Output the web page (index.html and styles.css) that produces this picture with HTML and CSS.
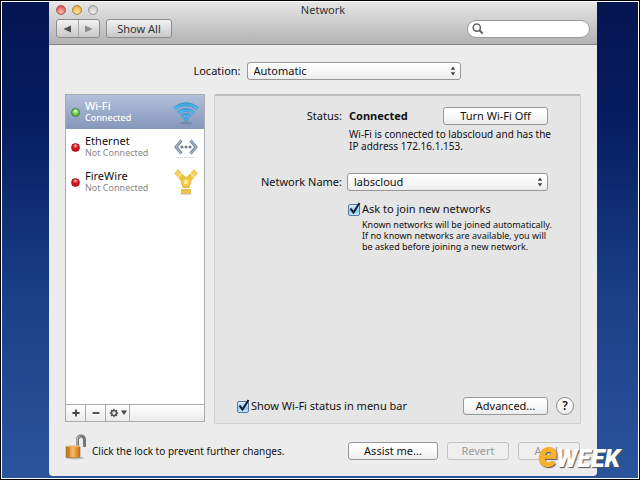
FILE: index.html
```
<!DOCTYPE html>
<html lang="en">
<head>
<meta charset="utf-8">
<title>Network</title>
<link rel="stylesheet" href="styles.css">
</head>
<body>
<div class="slide">
  <div class="desktop">
    <main class="window">
      <header class="toolbar">
        <div class="titlebar">
          <div class="lights">
            <button class="light light-red" aria-label="Close"></button>
            <button class="light light-amber" aria-label="Minimize"></button>
            <button class="light light-clear" aria-label="Zoom"></button>
          </div>
          <h1 class="title">Network</h1>
        </div>
        <div class="tools">
          <div class="segmented">
            <button class="segment" aria-label="Back"><svg width="8" height="8" viewBox="0 0 8 8"><path d="M8 0.5v7L0.5 4z" fill="#505050"/></svg></button>
            <button class="segment" aria-label="Forward"><svg width="8" height="8" viewBox="0 0 8 8"><path d="M0 0.5v7L7.5 4z" fill="#8b8b8b"/></svg></button>
          </div>
          <button class="tool-button">Show All</button>
          <label class="search">
            <svg width="12" height="12" viewBox="0 0 12 12" fill="none" stroke="#606060"><circle cx="4.8" cy="4.6" r="3.6" stroke-width="1.5"/><path d="M7.5 7.3l3.3 3.3" stroke-width="2"/></svg>
            <input class="search-input" type="search" aria-label="Search">
          </label>
        </div>
      </header>

      <div class="content">
        <div class="location">
          <label for="location">Location:</label>
          <div class="popup">
            <select id="location" class="popup-select"><option>Automatic</option></select>
            <svg class="popup-arrows" width="6" height="10" viewBox="0 0 6 10"><path d="M0.7 3.7L3 0.4l2.3 3.3zM0.7 6.3L3 9.6l2.3-3.3z" fill="#444"/></svg>
          </div>
        </div>

        <div class="columns">
          <aside class="sidebar">
            <ul class="services">
              <li>
                <button class="service service-selected">
                  <span class="dot dot-green"></span>
                  <span class="service-text"><span class="service-name">Wi-Fi</span><span class="service-state">Connected</span></span>
                  <svg class="service-icon" width="28" height="26" viewBox="0 0 28 26">
                    <defs><linearGradient id="wave" x1="0" y1="0" x2="0" y2="1"><stop offset="0" stop-color="#3a9fdb"/><stop offset="1" stop-color="#5cc4f4"/></linearGradient></defs>
                    <ellipse cx="14" cy="24" rx="6" ry="1.5" fill="#62769b" opacity=".5"/>
                    <path d="M1.500 8.500Q14-1.500 26.500 8.500L24.300 10.800Q14 3.300 3.700 10.800z" fill="url(#wave)" stroke="#2b84c0" stroke-width=".5"/>
                    <path d="M5.200 12.700Q14 5.800 22.800 12.700L20.500 15Q14 10.200 7.500 15z" fill="url(#wave)" stroke="#2b84c0" stroke-width=".5"/>
                    <path d="M8.800 16.600Q14 12.600 19.200 16.600L17 18.700Q14 16.600 11 18.700z" fill="url(#wave)" stroke="#2b84c0" stroke-width=".5"/>
                    <path d="M11.700 19.900Q14 18.300 16.300 19.900L14 22.800z" fill="#42b0ea" stroke="#2b84c0" stroke-width=".5"/>
                  </svg>
                </button>
              </li>
              <li>
                <button class="service">
                  <span class="dot dot-red"></span>
                  <span class="service-text"><span class="service-name">Ethernet</span><span class="service-state">Not Connected</span></span>
                  <svg class="service-icon" width="28" height="26" viewBox="0 0 28 26">
                    <g fill="none" stroke="#758da1" stroke-width="3"><path d="M9.500 6.500L4 13l5.500 6.500"/><path d="M18.500 6.500L24 13l-5.500 6.500"/></g>
                    <g fill="none" stroke="#b9cad7" stroke-width="1"><path d="M9.300 6.500L3.800 13l5.500 6.500"/><path d="M18.700 6.500L24.200 13l-5.500 6.500"/></g>
                    <g fill="#66798a"><circle cx="10" cy="13" r="1.500"/><circle cx="14" cy="13" r="1.500"/><circle cx="18" cy="13" r="1.500"/></g>
                    <path d="M4 23.500h20" stroke="#ddd" stroke-dasharray="3 1"/>
                  </svg>
                </button>
              </li>
              <li>
                <button class="service">
                  <span class="dot dot-red"></span>
                  <span class="service-text"><span class="service-name">FireWire</span><span class="service-state">Not Connected</span></span>
                  <svg class="service-icon" width="28" height="26" viewBox="0 0 28 26">
                    <ellipse cx="14" cy="25.200" rx="7" ry=".8" fill="#ddd"/>
                    <g fill="none" stroke="#f0c445" stroke-width="6"><path d="M13 12L8 6.500"/><path d="M15 12l5-5.500"/></g>
                    <path d="M2.500 4.500L6 0.500l3.500 3.800L5.800 8zM25.500 4.500L22 0.500l-3.500 3.800L22.200 8z" fill="#f5d160" stroke="#dbae35" stroke-width=".6"/>
                    <path d="M10 3.800L5.400 8.600M18 3.800l4.600 4.800" stroke="#fff" stroke-width=".8"/>
                    <path d="M10.500 14h7v6h-7z" fill="#e9b835"/>
                    <circle cx="14" cy="13" r="5" fill="#f3c94d" stroke="#dbae35" stroke-width=".6"/>
                    <circle cx="14" cy="13" r="2.200" fill="#ffeaa0"/>
                    <path d="M9.500 20.500h9v4h-9z" fill="#efc443" stroke="#d2a12c" stroke-width=".6"/>
                    <path d="M9.500 19.500h9" stroke="#fff"/>
                  </svg>
                </button>
              </li>
            </ul>
            <div class="sidebar-bar">
              <button class="bar-button" aria-label="Add service"><svg width="8" height="8" viewBox="0 0 8 8"><path d="M4 0.500v7M0.500 4h7" stroke="#444" stroke-width="1.800"/></svg></button>
              <button class="bar-button" aria-label="Remove service"><svg width="8" height="8" viewBox="0 0 8 8"><path d="M0.500 4h7" stroke="#444" stroke-width="1.800"/></svg></button>
              <button class="bar-button bar-menu" aria-label="Service actions">
                <svg width="18" height="10" viewBox="0 0 18 10"><g fill="none" stroke="#555"><circle cx="5" cy="5" r="2.500" stroke-width="1.600"/><path d="M5 .8v1.500M5 7.700v1.500M.8 5h1.500M7.700 5h1.500M2 2l1.100 1.100M6.900 6.900L8 8M2 8l1.100-1.100M6.900 3.100L8 2" stroke-width="1.300"/></g><path d="M12 2.500h6L15 7z" fill="#444"/></svg>
              </button>
            </div>
          </aside>

          <section class="panel">
            <div class="form">
              <span class="field-label">Status:</span>
              <div class="status">
                <strong>Connected</strong>
                <button class="button button-power">Turn Wi-Fi Off</button>
              </div>
              <p class="detail">Wi-Fi is connected to labscloud and has the<br>IP address 172.16.1.153.</p>
              <label class="field-label" for="network">Network Name:</label>
              <div class="popup">
                <select id="network" class="popup-select"><option>labscloud</option></select>
                <svg class="popup-arrows" width="6" height="10" viewBox="0 0 6 10"><path d="M0.7 3.7L3 0.4l2.3 3.3zM0.7 6.3L3 9.6l2.3-3.3z" fill="#444"/></svg>
              </div>
              <div class="join">
                <label class="check">
                  <span class="check-box"><input type="checkbox" checked><svg width="14" height="14" viewBox="0 0 14 14"><path d="M3.500 6.500l3 4L12.500 1" fill="none" stroke="#101c30" stroke-width="2"/></svg></span>
                  Ask to join new networks
                </label>
                <p class="note">Known networks will be joined automatically.<br>If no known networks are available, you will<br>be asked before joining a new network.</p>
              </div>
            </div>
            <div class="panel-foot">
              <label class="check">
                <span class="check-box"><input type="checkbox" checked><svg width="14" height="14" viewBox="0 0 14 14"><path d="M3.500 6.500l3 4L12.500 1" fill="none" stroke="#101c30" stroke-width="2"/></svg></span>
                Show Wi-Fi status in menu bar
              </label>
              <button class="button button-advanced">Advanced...</button>
              <button class="help" aria-label="Help">?</button>
            </div>
          </section>
        </div>

        <footer class="footer">
          <button class="lock" aria-label="Lock">
            <svg width="22" height="26" viewBox="0 0 22 26">
              <defs><linearGradient id="brass" x1="0" y1="0" x2="1" y2="0"><stop offset="0" stop-color="#b96d20"/><stop offset=".25" stop-color="#e09a42"/><stop offset=".5" stop-color="#f4bd6c"/><stop offset=".8" stop-color="#e48b2a"/><stop offset="1" stop-color="#b76b20"/></linearGradient></defs>
              <path d="M12.500 13V6Q12.500 2 16 2t3.500 4v7" fill="none" stroke="#777" stroke-width="3"/>
              <path d="M12 12V6Q12 2 15.500 1.800" fill="none" stroke="#ccc"/>
              <ellipse cx="10" cy="24" rx="9" ry="1.500" fill="#bbb"/>
              <path d="M1 12.500h14v11H1z" fill="url(#brass)" stroke="#b17025" stroke-width=".6"/>
              <path d="M1 12.500l3-1h11v1.500H4z" fill="#eab46a"/><path d="M4 13v10.500" stroke="#a96018" stroke-width=".8"/>
            </svg>
          </button>
          <span class="lock-text">Click the lock to prevent further changes.</span>
          <button class="button button-assist">Assist me...</button>
          <button class="button button-small" disabled>Revert</button>
          <button class="button button-small" disabled>Apply</button>
        </footer>
      </div>
    </main>
    <div class="brand"><span class="brand-e">e</span><span class="brand-week">WEEK</span></div>
  </div>
</div>
</body>
</html>
```
FILE: styles.css
```
* { box-sizing: border-box; }

body {
  margin: 0;
  background: #000;
  color: #111;
  font: 11px/14px "Noto Sans", "Open Sans", sans-serif;
}

button, input, select { font: inherit; color: inherit; margin: 0; padding: 0; }
button { border: 0; background: none; }
svg { display: block; flex: none; }
p, h1, ul { margin: 0; padding: 0; }

.slide {
  display: flex;
  min-height: 100vh;
  padding: 1px;
}

.desktop {
  position: relative;
  display: flex;
  flex: 1;
  min-width: 0;
  padding: 0 41px 2px 47px;
  border: 1px solid #fff;
  background: linear-gradient(#04154f, #071d62 25%, #1a3f86 62%, #2a559d);
}

.window {
  display: flex;
  flex: 1;
  flex-direction: column;
  min-width: 0;
  border-radius: 0 0 4px 4px;
  background: #ececec;
}

.toolbar {
  height: 43px;
  border-bottom: 1px solid #858585;
  background: linear-gradient(#e6e6e6, #b2b2b2);
}

.titlebar {
  display: grid;
  grid-template-columns: 1fr auto 1fr;
  align-items: center;
  height: 15px;
  padding: 0 7px;
}

.title { color: #333; font-size: 11px; font-weight: 400; }
.lights { display: flex; gap: 6px; }

.light {
  width: 10px;
  height: 10px;
  border: 1px solid #999;
  border-radius: 50%;
}

.light-red { border-color: #a55; background: radial-gradient(circle at 50% 75%, #ffc0b8, #e4574f 75%); }
.light-amber { border-color: #a98440; background: radial-gradient(circle at 50% 75%, #ffeaa5, #e9ad48 75%); }
.light-clear { background: radial-gradient(circle at 50% 75%, #eee, #c5c5c5 80%); }

.tools {
  display: flex;
  align-items: center;
  gap: 6px;
  padding: 2px 7px 0;
}

.segmented, .tool-button {
  height: 19px;
  border: 1px solid #8c8c8c;
  border-radius: 3px;
  background: linear-gradient(#f2f2f2, #c8c8c8);
}

.segmented { display: flex; width: 44px; }
.segment { display: flex; flex: 1; align-items: center; justify-content: center; }
.segment + .segment { border-left: 1px solid #aaa; }
.tool-button { width: 66px; color: #333; }

.search {
  display: flex;
  align-items: center;
  gap: 3px;
  width: 123px;
  height: 18px;
  margin-left: auto;
  padding: 0 6px 0 4px;
  border: 1px solid #999;
  border-radius: 9px;
  background: #fff;
}

.search-input { flex: 1; min-width: 0; border: 0; outline: 0; background: none; }

.content {
  display: flex;
  flex: 1;
  flex-direction: column;
  padding: 17px 16px 16px;
}

.location {
  display: flex;
  align-items: center;
  justify-content: center;
  gap: 6px;
  padding-left: 8px;
}

.location .popup { width: 214px; }

.popup {
  position: relative;
  height: 18px;
}

.popup-select {
  width: 100%;
  height: 100%;
  padding: 0 16px 0 6px;
  appearance: none;
  border: 1px solid #979797;
  border-radius: 3px;
  background: linear-gradient(#fff, #f8f8f8 50%, #ededed);
}

.popup-arrows {
  position: absolute;
  top: 4px;
  right: 5px;
  pointer-events: none;
}

.columns {
  display: flex;
  flex: 1;
  gap: 9px;
  margin-top: 14px;
}

.sidebar {
  display: flex;
  flex: none;
  flex-direction: column;
  width: 140px;
  margin-bottom: 2px;
  border: 1px solid #aaa;
  background: #fff;
}

.services {
  display: flex;
  flex: 1;
  flex-direction: column;
  gap: 1px;
  list-style: none;
}

.service {
  display: flex;
  align-items: center;
  gap: 5px;
  width: 100%;
  height: 34px;
  padding: 0 4px 0 5px;
  text-align: left;
}

.service-selected {
  background: linear-gradient(#b3c0da, #8496bb);
  color: #fff;
}

.service-text { display: flex; flex: 1; flex-direction: column; }
.service-name, .service-state { line-height: 12px; }
.service-state { color: #888; font-size: 9px; }
.service-selected .service-name { font-weight: 500; }
.service-selected .service-state { color: #fff; font-weight: 500; }

.dot {
  width: 9px;
  height: 9px;
  border-radius: 50%;
}

.dot-green { border: 1px solid #3c7d35; background: radial-gradient(circle at 50% 30%, #e5ffd5, #5cc342 60%); }
.dot-red { border: 1px solid #a01821; background: radial-gradient(circle at 50% 25%, #ffb5b5, #d4101c 45%); }

.sidebar-bar {
  display: flex;
  height: 17px;
  border-top: 1px solid #aaa;
  background: linear-gradient(#fff, #f5f5f5 50%, #ebebeb);
}

.bar-button {
  display: flex;
  align-items: center;
  justify-content: center;
  width: 20px;
  border-right: 1px solid #aaa;
}

.bar-menu { width: 24px; }

.panel {
  display: flex;
  flex: 1;
  flex-direction: column;
  justify-content: space-between;
  min-width: 0;
  padding: 11px 6px 8px 21px;
  border: 1px solid #cfcfcf;
  border-top: 2px solid #bdbdbd;
  border-radius: 2px;
  background: #e5e5e5;
}

.form {
  display: grid;
  grid-template-columns: 106px minmax(0, 1fr);
  column-gap: 5px;
  align-items: center;
  margin-right: 26px;
}

.field-label { text-align: right; }

.status {
  display: flex;
  align-items: center;
  justify-content: space-between;
  padding-left: 2px;
}

.detail {
  grid-column: 2;
  padding: 3px 0 21px 2px;
  font-size: 10px;
  line-height: 12px;
  white-space: nowrap;
}

.join { grid-column: 2; padding-top: 11px; }

.note {
  padding: 3px 0 0 15px;
  font-size: 9px;
  line-height: 11px;
  white-space: nowrap;
}

.check { display: flex; align-items: center; gap: 2px; }

.check-box { position: relative; width: 13px; height: 14px; }

.check-box input {
  display: block;
  width: 12px;
  height: 12px;
  margin: 2px 0 0 1px;
  appearance: none;
  border: 1px solid #5578a5;
  border-radius: 2px;
  background: linear-gradient(#e0f0ff, #8fc2ee 60%, #c5ecff);
}

.check-box svg {
  position: absolute;
  top: 0;
  left: 0;
  pointer-events: none;
}

.button {
  height: 18px;
  border: 1px solid #989898;
  border-radius: 3px;
  background: linear-gradient(#fff, #fafafa 50%, #ececec);
}

.button:disabled { border-color: #c2c2c2; background: #efefef; color: #999; }
.button-power { width: 105px; }
.button-advanced { width: 85px; margin-left: auto; }
.button-assist { width: 90px; margin-left: auto; }
.button-small { width: 62px; }

.panel-foot {
  display: flex;
  align-items: center;
  gap: 8px;
}

.help {
  width: 18px;
  height: 18px;
  border: 1px solid #8c8c8c;
  border-radius: 50%;
  background: linear-gradient(#fff, #eee);
  font-size: 12px;
  font-weight: 600;
}

.footer {
  display: flex;
  align-items: center;
  gap: 9px;
  padding: 18px 1px 0 0;
}

.lock { margin-top: -8px; margin-right: -4px; }
.lock-text { font-size: 10px; }

.brand {
  position: absolute;
  right: 18px;
  bottom: 5px;
  display: flex;
  align-items: baseline;
  font-family: Roboto, sans-serif;
  font-style: italic;
  font-weight: 900;
  line-height: 28px;
  text-shadow: 1px 1px 1px #555;
}

.brand-e { color: #f9b12c; font-size: 36px; }
.brand-week { margin-left: -1px; color: #fff; font-size: 25px; }
```
